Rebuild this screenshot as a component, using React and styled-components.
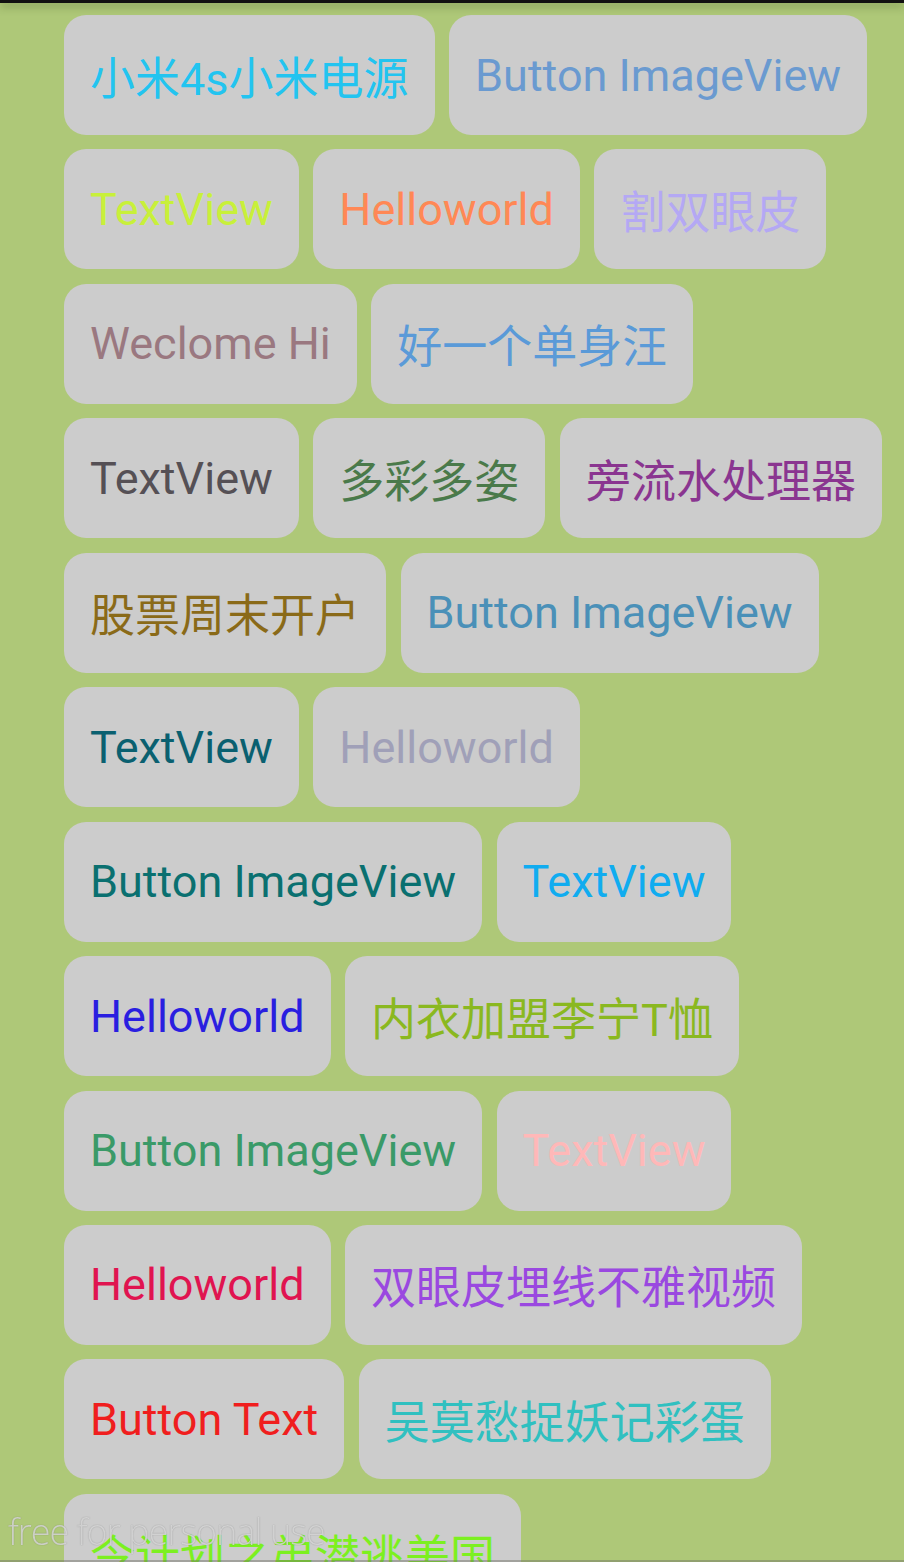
import React from "react";
import styled, { createGlobalStyle } from "styled-components";

const tags = [
  { text: "小米4s小米电源", color: "#22c4f0" },
  { text: "Button ImageView", color: "#6a9ad0" },
  { text: "TextView", color: "#c8f03a" },
  { text: "Helloworld", color: "#ff8855" },
  { text: "割双眼皮", color: "#b4a8f4" },
  { text: "Weclome Hi", color: "#9a7880" },
  { text: "好一个单身汪", color: "#5a9ad8" },
  { text: "TextView", color: "#555055" },
  { text: "多彩多姿", color: "#4a7a4a" },
  { text: "旁流水处理器", color: "#8a3590" },
  { text: "股票周末开户", color: "#8a6a18" },
  { text: "Button ImageView", color: "#4a90b8" },
  { text: "TextView", color: "#0a6070" },
  { text: "Helloworld", color: "#a0a0b8" },
  { text: "Button ImageView", color: "#0a7070" },
  { text: "TextView", color: "#10acf0" },
  { text: "Helloworld", color: "#2a1ee0" },
  { text: "内衣加盟李宁T恤", color: "#8ab820" },
  { text: "Button ImageView", color: "#3a9a68" },
  { text: "TextView", color: "#ffb8b8" },
  { text: "Helloworld", color: "#e01450" },
  { text: "双眼皮埋线不雅视频", color: "#9a48e0" },
  { text: "Button Text", color: "#f01e1e" },
  { text: "吴莫愁捉妖记彩蛋", color: "#30c0c0" },
  { text: "令计划之弟潜逃美国", color: "#7cf020" },
];

const App = () => {
  return (
    <Screen>
      <GlobalStyle />
      <TopEdge />
      <TagFlow>
        {tags.map((tag, i) => (
          <Tag key={i} $color={tag.color}>
            {tag.text}
          </Tag>
        ))}
      </TagFlow>
      <Watermark>free for personal use</Watermark>
      <BottomEdge />
    </Screen>
  );
};

const GlobalStyle = createGlobalStyle`
  html, body {
    margin: 0;
    padding: 0;
    background: #aec878;
    overflow: hidden;
  }
`;

const Screen = styled.div`
  width: 904px;
  min-height: 1562px;
  background: #aec878;
  font-family: Roboto, "Noto Sans CJK SC", sans-serif;
`;

const TopEdge = styled.div`
  height: 3px;
  background: #111;
  box-shadow: 0 3px 9px rgba(40, 60, 20, 0.5);
  position: relative;
  z-index: 2;
`;

const TagFlow = styled.div`
  display: flex;
  flex-wrap: wrap;
  align-content: flex-start;
  row-gap: 14.45px;
  column-gap: 14.5px;
  padding: 12px 0 0 64px;
`;

const Tag = styled.div`
  height: 120px;
  padding: 0 26px;
  display: flex;
  align-items: center;
  background: #cccccc;
  border-radius: 22px;
  color: ${(p) => p.$color};
  font-size: 45px;
  white-space: nowrap;
  box-sizing: border-box;
`;

const Watermark = styled.div`
  position: fixed;
  left: 8px;
  top: 1507px;
  font-family: "Open Sans", sans-serif;
  font-weight: 300;
  font-size: 36px;
  letter-spacing: -1px;
  color: rgba(240, 240, 240, 0.7);
  text-shadow: 0 0 1px rgba(80, 80, 80, 0.6);
  z-index: 3;
`;

const BottomEdge = styled.div`
  position: fixed;
  left: 0;
  right: 0;
  bottom: 0;
  height: 2px;
  background: rgba(110, 110, 100, 0.45);
  z-index: 3;
`;

export default App;
